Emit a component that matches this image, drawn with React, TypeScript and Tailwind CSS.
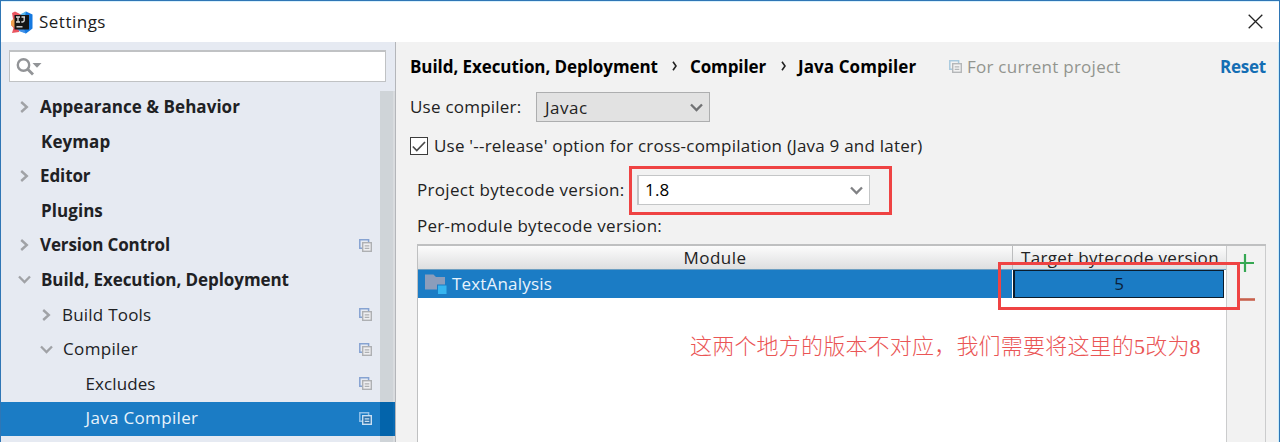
import type { ReactNode } from "react";

function ChevronRight() {
  return (
    <svg width="9" height="12" viewBox="0 0 9 12" fill="none" stroke="#a0a2a6" strokeWidth="2.4">
      <path d="M1.2 1 L6.8 6 L1.2 11" />
    </svg>
  );
}

function ChevronDown({ color = "#a0a2a6" }: { color?: string }) {
  return (
    <svg width="13" height="9" viewBox="0 0 13 9" fill="none" stroke={color} strokeWidth="2.3">
      <path d="M1 1.5 L6.5 7 L12 1.5" />
    </svg>
  );
}

function ProjectIcon({ back = "#86a3d2", front = "#aeb0b3", fill = "#eeeff1" }: { back?: string; front?: string; fill?: string }) {
  return (
    <svg width="13" height="13" viewBox="0 0 13 13" fill="none">
      <path d="M3 9.3 H0.8 V0.8 H9.6 V3" stroke={back} strokeWidth="1.5" />
      <rect x="3.7" y="3.7" width="8.6" height="8.6" fill={fill} stroke={front} strokeWidth="1.4" />
      <path d="M5.7 6.8 H10.3 M5.7 9.3 H10.3" stroke={front} strokeWidth="1.2" />
    </svg>
  );
}

function AppLogo() {
  return (
    <svg width="22" height="23" viewBox="0 0 22 23">
      <path d="M1 2 L4 0.5 L11 4 L8 21 L1 22 L2.5 17 L0 14 L2 8 Z" fill="#ea5560" />
      <path d="M0 10 L4 7 V17 L0 14 Z" fill="#f0a050" />
      <path d="M10 4 L15 0.5 L21.5 3.5 V17.5 L15 22.5 L8 19 Z" fill="#1579e0" />
      <path d="M9 3.5 L15 0.5 L14 5 Z" fill="#58b7ea" />
      <path d="M6 18 L13 18 L15 22.5 L9 20.5 Z" fill="#3f90e8" />
      <rect x="3.5" y="4" width="14.5" height="14.5" fill="#151515" />
      <path d="M5 6 H9 M7 6 V11 M5 11 H9 M10.5 6 H14 M13.2 6 V9.6 Q13.2 11 11.6 11 H10.3" fill="none" stroke="#dcdcdc" strokeWidth="1.3" />
      <path d="M5.5 15.8 H11.5" stroke="#dcdcdc" strokeWidth="1.4" />
    </svg>
  );
}

type Row = {
  label: ReactNode;
  arrow?: "right" | "down";
  pad: string;
  project?: boolean;
  selected?: boolean;
};

const rows: Row[] = [
  { label: <span className="font-bold tracking-[0.04px]">Appearance &amp; Behavior</span>, arrow: "right", pad: "pl-[17px]" },
  { label: <span className="pl-px font-bold tracking-[0.1px]">Keymap</span>, pad: "pl-[17px]" },
  { label: <span className="font-bold tracking-[-0.1px]">Editor</span>, arrow: "right", pad: "pl-[17px]" },
  { label: <span className="pl-px font-bold tracking-[0.06px]">Plugins</span>, pad: "pl-[17px]" },
  { label: <span className="font-bold tracking-[-0.13px]">Version Control</span>, arrow: "right", pad: "pl-[17px]", project: true },
  { label: <span className="pl-px font-bold tracking-[-0.07px]">Build, Execution, Deployment</span>, arrow: "down", pad: "pl-[17px]" },
  { label: <span className="tracking-[0.22px]">Build Tools</span>, arrow: "right", pad: "pl-[39px]", project: true },
  { label: <span className="pl-px tracking-[0.35px]">Compiler</span>, arrow: "down", pad: "pl-[39px]", project: true },
  { label: <span className="pl-[1.5px] tracking-[0.1px]">Excludes</span>, pad: "pl-[61px]", project: true },
  { label: <span className="pl-[1.5px] tracking-[0.33px]">Java Compiler</span>, pad: "pl-[61px]", project: true, selected: true },
];

function TreeRow({ row }: { row: Row }) {
  return (
    <div className={`flex h-[34.6px] ${row.selected ? "bg-[#1b7cc5] text-[#e8f3fc]" : "text-[#202124]"}`}>
      <div className={`flex flex-1 items-center pb-[1.6px] ${row.pad}`}>
        <span className="flex w-[22px] shrink-0 items-center">
          {row.arrow === "right" && <span className="ml-[2px]"><ChevronRight /></span>}
          {row.arrow === "down" && <ChevronDown />}
        </span>
        <span className="flex-1 whitespace-nowrap">{row.label}</span>
        {row.project && (
          <span className="mr-[8px]">
            {row.selected ? <ProjectIcon back="#8fc0e8" front="#c8dff2" fill="#2a70ab" /> : <ProjectIcon />}
          </span>
        )}
      </div>
      <span className={`w-[15px] shrink-0 border-r-2 ${row.selected ? "border-[#0a6ab2] bg-[#0364ab]" : "border-[#d9dcdf] bg-[#cfd4d8]"}`} />
    </div>
  );
}

function Sidebar() {
  return (
    <aside className="flex w-[395px] shrink-0 flex-col border-r border-[#b4b6ba] bg-[#e6eaf2]">
      <div className="mt-[8px] ml-[8px] flex h-[32px] w-[377px] shrink-0 items-center border border-t-2 border-[#c0c2c4] bg-white pl-[6px]">
        <svg width="27" height="18" viewBox="0 0 27 18" fill="none">
          <circle cx="7.5" cy="7" r="5.7" stroke="#929497" strokeWidth="2.4" />
          <path d="M11.5 11 L17 16.5" stroke="#929497" strokeWidth="2.8" />
          <path d="M16.5 5 H25.5 L21 9.7 Z" fill="#929497" />
        </svg>
      </div>
      <div className="mt-[8.5px] flex flex-1 flex-col">
        {rows.map((row, i) => <TreeRow key={i} row={row} />)}
        <div className="flex flex-1 justify-end">
          <span className="w-[15px] border-r-2 border-[#d9dcdf] bg-[#cfd4d8]" />
        </div>
      </div>
    </aside>
  );
}

function Breadcrumb() {
  const sep = (
    <svg width="6" height="10" viewBox="0 0 6 10" fill="none" stroke="#222" strokeWidth="1.6">
      <path d="M1 0.8 L4 5 L1 9.2" />
    </svg>
  );
  return (
    <div className="flex h-[50px] items-center pl-[14px] text-black">
      <span className="w-[262px] font-bold tracking-[-0.07px]">Build, Execution, Deployment</span>
      <span className="-mt-[2px] w-[18px]">{sep}</span>
      <span className="w-[91px] font-bold tracking-[-0.12px]">Compiler</span>
      <span className="-mt-[2px] w-[17px]">{sep}</span>
      <span className="w-[151px] font-bold tracking-[0.08px]">Java Compiler</span>
      <span className="-mt-[2px] w-[18px]"><ProjectIcon back="#a9cadf" front="#b5b7b9" fill="#f2f2f2" /></span>
      <span className="tracking-[0.25px] text-[#92958f]">For current project</span>
      <span className="mr-[12px] ml-auto font-bold tracking-[-0.23px] text-[#146eb4]">Reset</span>
    </div>
  );
}

function ModuleTable() {
  return (
    <div className="ml-[21px] flex w-[849px] flex-1 border-t-2 border-l border-[#bfc0c1]">
      <div className="flex w-[808px] flex-col bg-white">
        <div className="flex h-[23px] bg-linear-to-b from-[#fcfcfc] to-[#dedfe0] leading-[23px] text-[#222]">
          <div className="w-[595px] border-r border-[#bcbdbe] text-center tracking-[0.5px]">Module</div>
          <div className="w-[208px] pl-[8px] whitespace-nowrap tracking-[0.33px]">Target bytecode version</div>
        </div>
        <div className="flex h-[29px] border-t border-[#6d9fc2]">
          <div className="flex w-[594px] items-center bg-[#1b7cc5] pl-[7px] text-[#e8f3fc]">
            <svg width="22" height="20" viewBox="0 0 22 20">
              <path d="M0 0.5 H8.5 L11 3 H20 V15.5 H0 Z" fill="#8b9dbb" />
              <rect x="12" y="10.5" width="9.5" height="9.5" fill="#1b7cc5" />
              <rect x="13" y="11.5" width="8.5" height="8.5" fill="#36b5f0" />
            </svg>
            <span className="ml-[5px] tracking-[0.18px]">TextAnalysis</span>
          </div>
          <div className="ml-[1px] flex w-[211px] items-center justify-center border border-l-2 border-[#0b1c2c] bg-[#1b7cc5] text-[#0b1f3a]">5</div>
        </div>
      </div>
      <div className="flex flex-1 flex-col items-start border-r border-l border-[#cbcccd] pt-[8px] pl-[9px]">
        <svg width="20" height="48" viewBox="0 0 20 48" fill="none">
          <path d="M9 0 V18 M0 9 H18" stroke="#35a853" strokeWidth="2.2" />
          <path d="M2 45.5 H19" stroke="#c8614d" strokeWidth="2.6" />
        </svg>
      </div>
    </div>
  );
}

export default function App() {
  return (
    <div className="relative flex h-[442px] w-[1280px] flex-col overflow-hidden border-x border-t border-[#2f76b5] bg-white font-['Open_Sans','Noto_Sans_CJK_SC',sans-serif] text-[17px] leading-[24px]">
      <header className="flex h-[41px] shrink-0 items-center justify-between border-t border-[#d9f1fd] pr-[16px] pl-[10px]">
        <div className="flex items-center gap-[6px]">
          <AppLogo />
          <span className="tracking-[0.49px] text-[#1c1c1c]">Settings</span>
        </div>
        <svg className="-mt-px" width="15" height="15" viewBox="0 0 15 15" stroke="#222" strokeWidth="1.3">
          <path d="M0.7 0.7 L14.3 14.3 M14.3 0.7 L0.7 14.3" />
        </svg>
      </header>
      <div className="flex min-h-0 flex-1">
        <Sidebar />
        <main className="flex flex-1 flex-col border-r border-[#c9ecfb] bg-[#f2f2f2] whitespace-nowrap text-[#222]">
          <Breadcrumb />
          <div className="flex h-[30px] items-center pl-[14px]">
            <span className="w-[126px] tracking-[0.23px]">Use compiler:</span>
            <div className="flex h-[30px] w-[174px] items-center justify-between border border-[#adaeaf] bg-[#e2e2e2] pr-[6px] pl-[8px]">
              <span className="mt-px tracking-[0.5px]">Javac</span>
              <ChevronDown color="#707173" />
            </div>
          </div>
          <div className="mt-[14px] flex h-[20px] items-center pl-[14px]">
            <span className="flex size-[18px] items-center justify-center border border-[#3c3c3c] bg-white">
              <svg width="14" height="11" viewBox="0 0 14 11" fill="none" stroke="#4a4a4a" strokeWidth="1.7">
                <path d="M0.8 5.5 L4.8 9.5 L13 1" />
              </svg>
            </span>
            <span className="ml-[6px] tracking-[0.22px]">Use '--release' option for cross-compilation (Java 9 and later)</span>
          </div>
          <div className="mt-[19px] flex h-[30px] items-center pl-[21px]">
            <span className="w-[220px] tracking-[0.32px]">Project bytecode version:</span>
            <div className="flex h-[30px] w-[233px] items-center justify-between border border-l-2 border-[#c4c6c7] bg-white pr-[6px] pl-[6px] text-black">
              <span className="tracking-[0.2px]">1.8</span>
              <ChevronDown color="#808184" />
            </div>
          </div>
          <div className="mt-[9px] mb-[6px] h-[24px] pl-[21px] tracking-[0.29px]">Per-module bytecode version:</div>
          <ModuleTable />
        </main>
      </div>
      <div className="absolute top-[165px] left-[628px] h-[49px] w-[263px] border-[3px] border-[#ef4343]" />
      <div className="absolute top-[261px] left-[997px] h-[48px] w-[242px] border-[3px] border-[#ef4343]" />
      <p className="absolute top-[331px] left-[689px] font-['Liberation_Serif','Noto_Sans_CJK_SC',serif] text-[22px] leading-[30px] font-light tracking-[0.2px] whitespace-nowrap text-[#ea5555]">
        这两个地方的版本不对应，我们需要将这里的5改为8
      </p>
    </div>
  );
}
